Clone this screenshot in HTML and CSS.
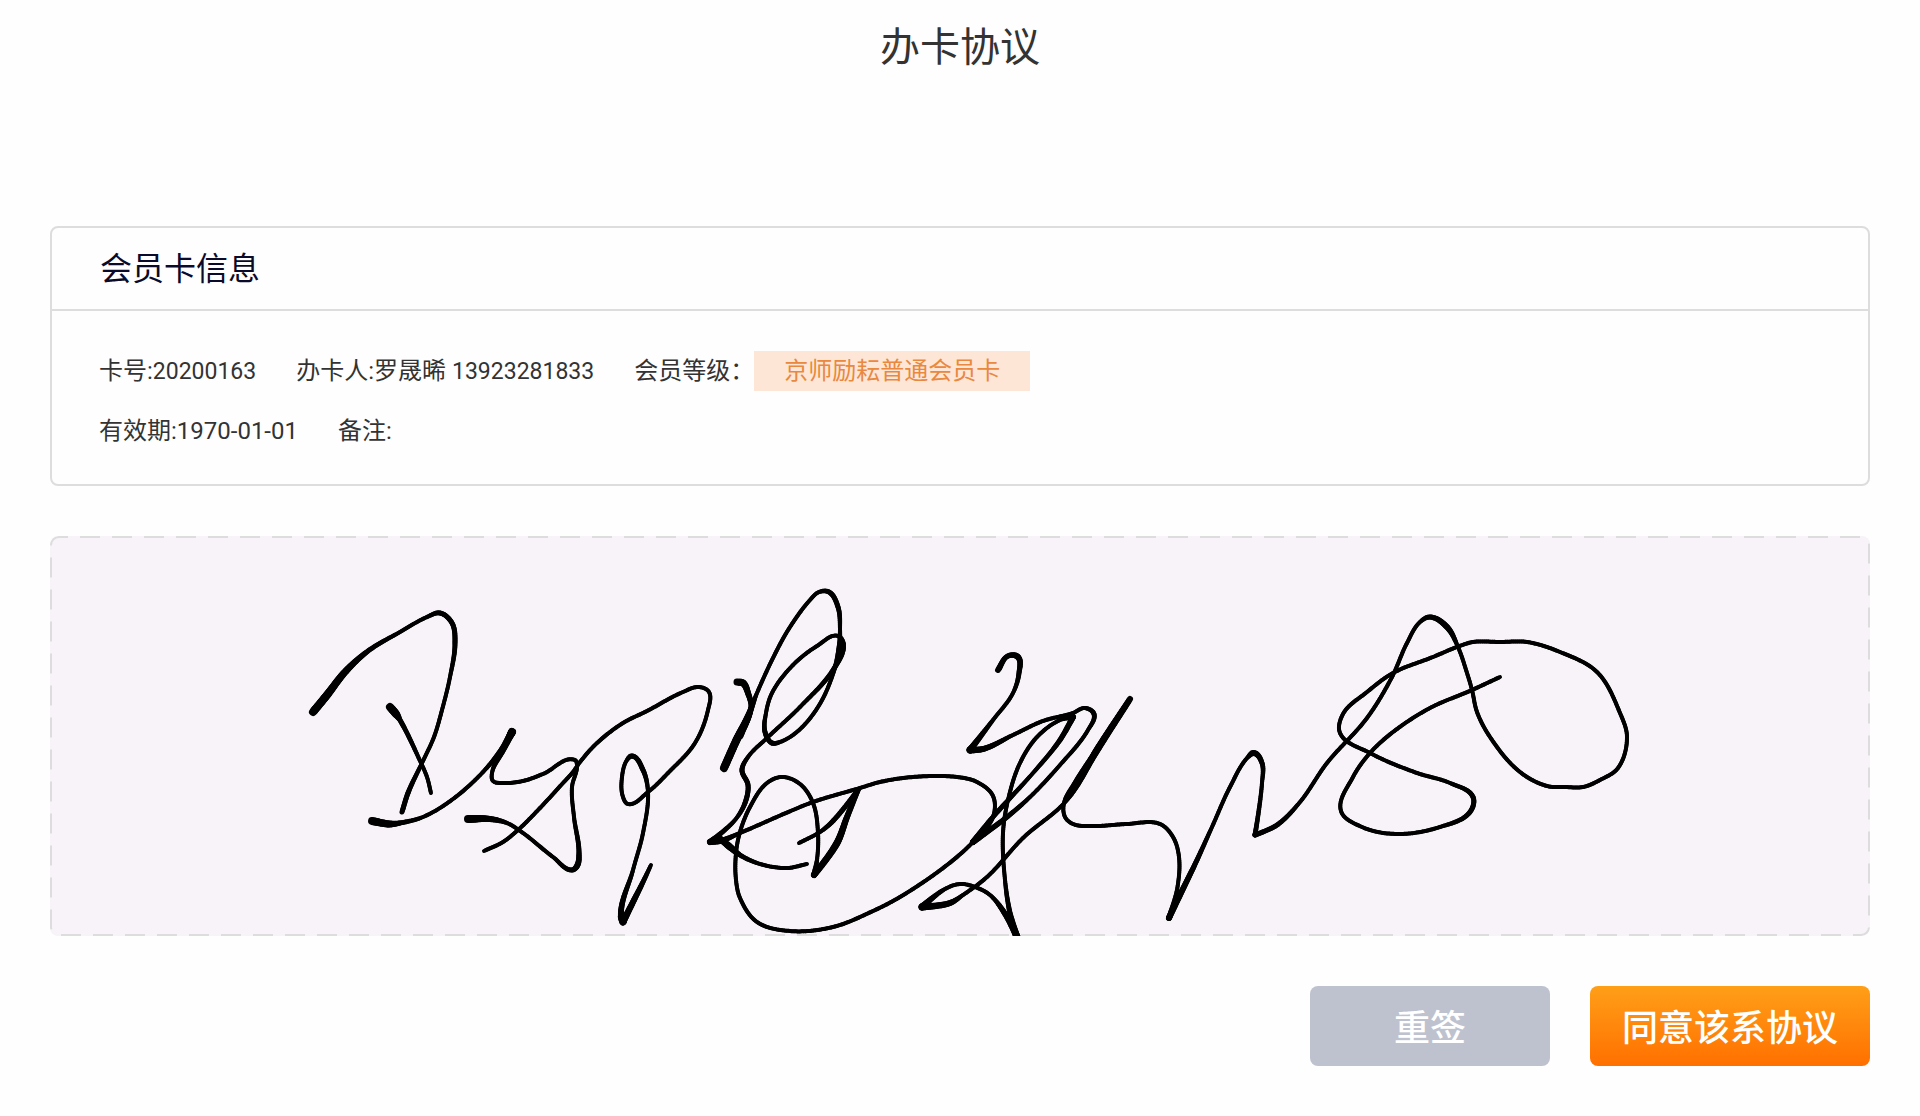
FILE: index.html
```
<!DOCTYPE html>
<html lang="zh-Hans">
<head>
  <meta charset="UTF-8" />
  <meta name="viewport" content="width=device-width, initial-scale=1" />
  <title>办卡协议</title>
  <link rel="stylesheet" href="styles.css">
</head>
<body>

<header class="page-header">
  <h1>办卡协议</h1>
</header>

<main class="content">
  <section class="card">
    <h2 class="card-title">会员卡信息</h2>
    <div class="card-body">
      <div class="info-row">
        <span>卡号:<span class="num">20200163</span></span>
        <span>办卡人:罗晟晞 <span class="num">13923281833</span></span>
        <span class="level">会员等级：<span class="tag">京师励耘普通会员卡</span></span>
      </div>
      <div class="info-row">
        <span>有效期:1970-01-01</span>
        <span>备注:</span>
      </div>
    </div>
  </section>

  <section class="sign-box">
    <svg class="sign-border" aria-hidden="true"><rect x="1" y="1" rx="8" /></svg>
    <canvas id="signPad" width="1820" height="400"></canvas>
  </section>

  <div class="actions">
    <button type="button" id="resetBtn" class="btn btn-reset">重签</button>
    <button type="button" id="agreeBtn" class="btn btn-agree">同意该系协议</button>
  </div>
</main>

<script src="sign.js"></script>
</body>
</html>
```

FILE: styles.css
```
* {
  box-sizing: border-box;
}

body {
  margin: 0;
  background: #fefefe;
  color: #333;
  font-family: Roboto, "Noto Sans CJK SC", sans-serif;
}

h1, h2 {
  margin: 0;
  font-weight: 400;
}

.page-header {
  padding: 18px 50px 16px;
  text-align: center;
}

.page-header h1 {
  font-size: 40px;
  line-height: 60px;
}

.content {
  padding: 132px 50px 50px;
}

.card {
  border: 2px solid #ddd;
  border-radius: 8px;
}

.card-title {
  padding: 16px 48px 15px;
  border-bottom: 2px solid #ddd;
  color: #0a0a2a;
  font-size: 32px;
  line-height: 50px;
}

.card-body {
  display: flex;
  flex-direction: column;
  gap: 20px;
  padding: 40px 47px 33px;
}

.info-row {
  display: flex;
  flex-wrap: wrap;
  gap: 0 40px;
  font-size: 24px;
  line-height: 40px;
}

.num {
  font-size: 23px;
  line-height: 1;
}

.level {
  display: flex;
}

.tag {
  padding: 0 30px;
  background: #fde6d6;
  color: #e9883f;
}

.sign-box {
  position: relative;
  height: 400px;
  margin-top: 50px;
  border-radius: 8px;
  background: #f7f3f8;
  overflow: hidden;
}

.sign-border {
  position: absolute;
  top: 0;
  left: 0;
  width: 100%;
  height: 100%;
}

.sign-border rect {
  width: calc(100% - 2px);
  height: calc(100% - 2px);
  fill: none;
  stroke: #ddd;
  stroke-width: 2;
  stroke-dasharray: 20 12;
  stroke-dashoffset: 11;
}

#signPad {
  position: relative;
  display: block;
  width: 100%;
  height: 100%;
  object-fit: contain;
}

.actions {
  display: flex;
  justify-content: flex-end;
  gap: 40px;
  margin-top: 50px;
}

.btn {
  height: 80px;
  padding: 0 0 2px;
  border: none;
  border-radius: 8px;
  color: #fff;
  font-family: inherit;
  font-size: 36px;
  font-weight: 500;
  cursor: pointer;
}

.btn-reset {
  width: 240px;
  background: #bec2cf;
}

.btn-agree {
  width: 280px;
  background: linear-gradient(#ff9f18, #ff7000);
}
```

FILE: sign.js
```
const pad = document.getElementById('signPad');
const ctx = pad.getContext('2d');

// 笔迹：每个点为 [x, y, 笔宽]，笔宽省略时为 4
const strokes = [
  [[263,176,8],[277,159,8],[295,136,7],[318,115,5],[350,96],[377,81],[390,77,5],[402,87,5],[405,107,5],[400,141],[392,174],[384,201],[372,227],[358,257,5],[352,276,5]],
  [[340,171,8],[346,178,8],[350,184,5],[371,227],[377,241],[381,257]],
  [[322,285,8],[340,288,7],[350,287,5],[373,281],[403,263],[433,236],[453,211,5],[462,196,8],[453,214,6],[442,237],[443,245],[453,247],[473,245],[493,238],[525,224],[527,229],[522,251],[524,281],[529,317,5],[527,330,6],[522,334,5],[503,321],[473,297],[457,287],[440,283,6],[418,283,8]],
  [[434,315],[453,306],[468,294],[490,272],[513,247],[523,236],[530,226],[547,207],[573,187],[597,175],[633,156],[649,151],[659,156],[658,174],[645,207],[618,237],[598,256],[578,268],[573,261],[572,241],[577,224],[582,220,5],[593,234,5],[598,256],[593,297],[583,334],[571,381,6],[573,386,7],[583,366,6],[593,346,5],[601,329]],
  [[687,146,7],[693,147,7],[698,157,6],[701,171,5],[690,200,7]],
  [[674,232,8],[687,203,8],[697,183,7],[707,157],[727,114],[740,91],[760,64],[769,56],[779,56,5],[788,71,5],[790,94],[789,112,5],[782,141],[768,171],[748,195],[730,206],[722,207,5],[715,196,5],[716,177],[722,157],[743,129],[767,110],[788,100],[793,109,6],[785,131,5],[750,171],[717,202],[698,221],[692,234,5],[698,249,5],[695,267,5],[685,284],[660,306,6],[670,305,6],[690,297],[743,274],[763,266],[810,252],[830,246],[863,241],[907,241],[927,246],[943,260],[943,281],[922,307],[897,329],[850,361],[823,375],[783,391],[740,395],[707,386],[690,362],[686,344],[686,317],[690,296],[700,271],[717,247],[732,241],[750,248],[763,267],[768,297],[767,324],[764,339,6],[787,307,7],[797,281,6],[808,254,5],[782,286,5],[770,296],[749,307]],
  [[668,301,6],[680,311,7],[690,319,5],[710,328],[737,332],[757,328]],
  [[948,134,6],[958,120,5],[968,121,6],[969,137,5],[963,157],[943,184],[920,214,7],[933,213,6],[963,199],[993,185],[1023,177],[1035,172],[1044,178,5],[1038,194],[1010,229],[980,261],[957,281,5],[923,306,6],[943,281,5],[983,237],[1010,204,5],[1023,181,6],[1010,184],[987,201],[970,227],[958,264],[953,297],[955,344],[960,377,5],[967,401,7],[957,381,6],[940,359],[925,351],[910,348],[895,353],[872,371,7],[900,367,6],[913,359],[937,341],[973,302],[1017,264],[1047,214,7],[1080,163,6]],
  [[1047,214,6],[1025,247,5],[1014,267],[1015,281],[1023,288],[1043,290],[1077,288],[1110,288],[1123,301],[1129,321],[1127,354],[1119,382,6],[1130,359,6],[1147,324,5],[1162,291],[1180,251],[1198,221],[1204,217,6],[1212,227,5],[1212,247],[1205,299,5],[1227,289,5],[1250,266],[1277,227],[1317,182],[1342,141],[1357,107],[1370,86],[1380,81,5],[1397,91,6],[1408,111],[1417,137],[1422,154],[1427,176],[1440,201],[1470,236],[1497,250],[1515,251],[1533,251],[1550,244],[1568,232],[1577,201],[1570,177],[1547,136],[1510,116],[1477,106],[1450,106],[1423,106],[1407,111],[1383,121],[1343,137],[1317,156],[1293,178],[1290,197],[1320,217],[1367,237],[1400,247],[1423,261,5],[1420,276,5],[1390,291],[1347,298],[1312,291],[1291,275],[1303,241],[1320,217],[1343,196],[1380,172],[1422,154],[1450,141]]
];

ctx.lineCap = 'round';
ctx.strokeStyle = '#000';

// 点与点之间的切线，急转弯处不做平滑
function tangent(a, p, b) {
  const d1 = Math.hypot(p[0] - a[0], p[1] - a[1]) || 1;
  const d2 = Math.hypot(b[0] - p[0], b[1] - p[1]) || 1;
  const u = [(p[0] - a[0]) / d1, (p[1] - a[1]) / d1];
  const v = [(b[0] - p[0]) / d2, (b[1] - p[1]) / d2];
  if (u[0] * v[0] + u[1] * v[1] < -0.4) return [0, 0];
  const len = Math.hypot(u[0] + v[0], u[1] + v[1]) || 1;
  return [(u[0] + v[0]) / len, (u[1] + v[1]) / len];
}

function drawStroke(points) {
  for (let i = 0; i < points.length - 1; i++) {
    const p = points[i];
    const q = points[i + 1];
    const k = Math.hypot(q[0] - p[0], q[1] - p[1]);
    const m = tangent(points[i - 1] || p, p, q);
    const n = tangent(p, q, points[i + 2] || q);
    const w1 = p[2] || 4;
    const w2 = q[2] || 4;
    const steps = Math.ceil(k / 2);
    let last = p;
    for (let s = 1; s <= steps; s++) {
      const t = s / steps;
      const t2 = t * t;
      const t3 = t2 * t;
      const next = [0, 1].map(c =>
        (2 * t3 - 3 * t2 + 1) * p[c] + (t3 - 2 * t2 + t) * k * m[c] +
        (3 * t2 - 2 * t3) * q[c] + (t3 - t2) * k * n[c]);
      ctx.lineWidth = w1 + (w2 - w1) * t;
      ctx.beginPath();
      ctx.moveTo(last[0], last[1]);
      ctx.lineTo(next[0], next[1]);
      ctx.stroke();
      last = next;
    }
  }
}

strokes.forEach(drawStroke);

document.getElementById('resetBtn').onclick = () => {
  ctx.clearRect(0, 0, pad.width, pad.height);
};

// 手写签名
let lastPoint = null;

function padPoint(e) {
  const rect = pad.getBoundingClientRect();
  const scale = Math.min(rect.width / pad.width, rect.height / pad.height);
  return [
    (e.clientX - rect.left - (rect.width - pad.width * scale) / 2) / scale,
    (e.clientY - rect.top - (rect.height - pad.height * scale) / 2) / scale
  ];
}

pad.addEventListener('pointerdown', e => {
  lastPoint = padPoint(e);
});

pad.addEventListener('pointermove', e => {
  if (!lastPoint) return;
  const p = padPoint(e);
  drawStroke([lastPoint, p]);
  lastPoint = p;
});

window.addEventListener('pointerup', () => {
  lastPoint = null;
});
```
